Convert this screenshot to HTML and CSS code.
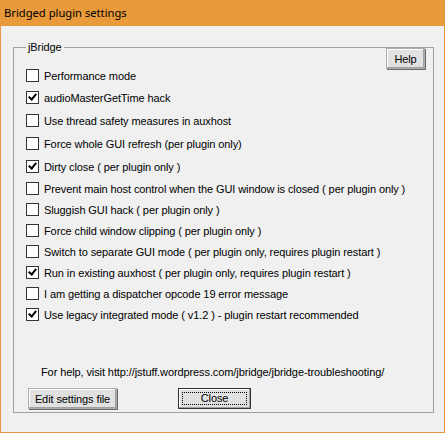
FILE: index.html
```html
<!DOCTYPE html>
<html>
<head>
<meta charset="utf-8">
<link rel="stylesheet" href="styles.css">
</head>
<body>
<div class="window">
  <div class="titlebar">Bridged plugin settings</div>
  <div class="client">
    <fieldset class="group">
      <legend class="group-label">jBridge</legend>
      <div class="help-row"><button class="btn btn-help">Help</button></div>
      <div class="options">
        <div class="opt r1"><span class="cb"></span><span>Performance mode</span></div>
        <div class="opt r2"><span class="cb on"></span><span>audioMasterGetTime hack</span></div>
        <div class="opt r2"><span class="cb"></span><span>Use thread safety measures in auxhost</span></div>
        <div class="opt r2"><span class="cb"></span><span>Force whole GUI refresh (per plugin only)</span></div>
        <div class="opt r2"><span class="cb on"></span><span>Dirty close ( per plugin only )</span></div>
        <div class="opt r3"><span class="cb"></span><span>Prevent main host control when the GUI window is closed ( per plugin only )</span></div>
        <div class="opt r3"><span class="cb"></span><span>Sluggish GUI hack ( per plugin only )</span></div>
        <div class="opt r3"><span class="cb"></span><span>Force child window clipping ( per plugin only )</span></div>
        <div class="opt r3"><span class="cb"></span><span>Switch to separate GUI mode ( per plugin only, requires plugin restart )</span></div>
        <div class="opt r3"><span class="cb on"></span><span>Run in existing auxhost ( per plugin only, requires plugin restart )</span></div>
        <div class="opt r3"><span class="cb"></span><span>I am getting a dispatcher opcode 19 error message</span></div>
        <div class="opt r3"><span class="cb on"></span><span>Use legacy integrated mode ( v1.2 ) - plugin restart recommended</span></div>
      </div>
      <div class="help-text">For help, visit http://jstuff.wordpress.com/jbridge/jbridge-troubleshooting/</div>
      <div class="actions">
        <button class="btn btn-edit">Edit settings file</button>
        <button class="btn btn-close"><span class="focus">Close</span></button>
      </div>
    </fieldset>
  </div>
</div>
</body>
</html>
```
FILE: styles.css
```css
html, body {
  margin: 0;
  padding: 0;
  background: #F0F0F0;
}
body {
  font-family: "Liberation Sans", Arial, sans-serif;
  font-size: 11px;
  letter-spacing: -0.1px;
  color: #000;
}
.window {
  width: 445px;
  height: 433px;
  box-sizing: border-box;
  border: 1px solid #E8973A;
  border-top: none;
  display: flex;
  flex-direction: column;
  background: #F0F0F0;
}
.titlebar {
  height: 26px;
  background: #E99A3B;
  margin: 0 -1px;
  padding-left: 4px;
  font-family: "Noto Sans", "Open Sans", sans-serif;
  font-size: 11.2px;
  letter-spacing: 0;
  line-height: 26px;
  color: #000;
}
.client {
  flex: 1;
  padding: 15px 10px 10px 12px;
}
.group {
  margin: 0;
  height: 372px;
  box-sizing: border-box;
  border: 1px solid #A0A0A0;
  border-radius: 0;
  padding: 0 8px 0 11px;
  display: flex;
  flex-direction: column;
}
.group-label {
  padding: 0 2px;
  margin-left: 1px;
  font-size: 11px;
  line-height: 12px;
}
.help-row {
  display: flex;
  justify-content: flex-end;
  margin-top: -5px;
}
.btn {
  font-family: "Liberation Sans", Arial, sans-serif;
  font-size: 11px;
  font-weight: 400;
  letter-spacing: -0.1px;
  color: #000;
  background: #E1E1E1;
  border: 1px solid #ADADAD;
  box-shadow: inset -1px -1px 0 #A0A0A0, inset 1px 1px 0 #FFFFFF, 1px 1px 0 #696969;
  padding: 0;
  height: 21px;
  margin: 0;
}
.btn-help {
  width: 39px;
}
.options {
  display: flex;
  flex-direction: column;
  margin-top: -4px;
  padding-left: 1px;
}
.opt {
  display: flex;
  align-items: center;
  gap: 5px;
  height: 21px;
}
.opt.r2 { height: 23px; }
.cb {
  width: 11px;
  height: 11px;
  border: 1px solid #333;
  background: #FFF;
  position: relative;
  flex: none;
  box-sizing: content-box;
}
.cb.on::after {
  content: "";
  position: absolute;
  left: 3px;
  top: 0px;
  width: 3px;
  height: 6px;
  border: solid #000;
  border-width: 0 2px 2px 0;
  transform: rotate(40deg);
}
.help-text {
  margin-top: 41px;
  padding-left: 16px;
  height: 14px;
}
.actions {
  display: flex;
  margin-top: 8px;
  padding-left: 3px;
}
.btn-edit {
  width: 89px;
}
.btn-close {
  width: 73px;
  margin-left: 61px;
  border: 1px solid #333;
  box-shadow: inset -1px -1px 0 #A0A0A0, inset 1px 1px 0 #FFFFFF;
  padding: 3px;
}
.focus {
  display: block;
  height: 100%;
  box-sizing: border-box;
  border: 1px dotted #000;
  line-height: 11px;
}
```
